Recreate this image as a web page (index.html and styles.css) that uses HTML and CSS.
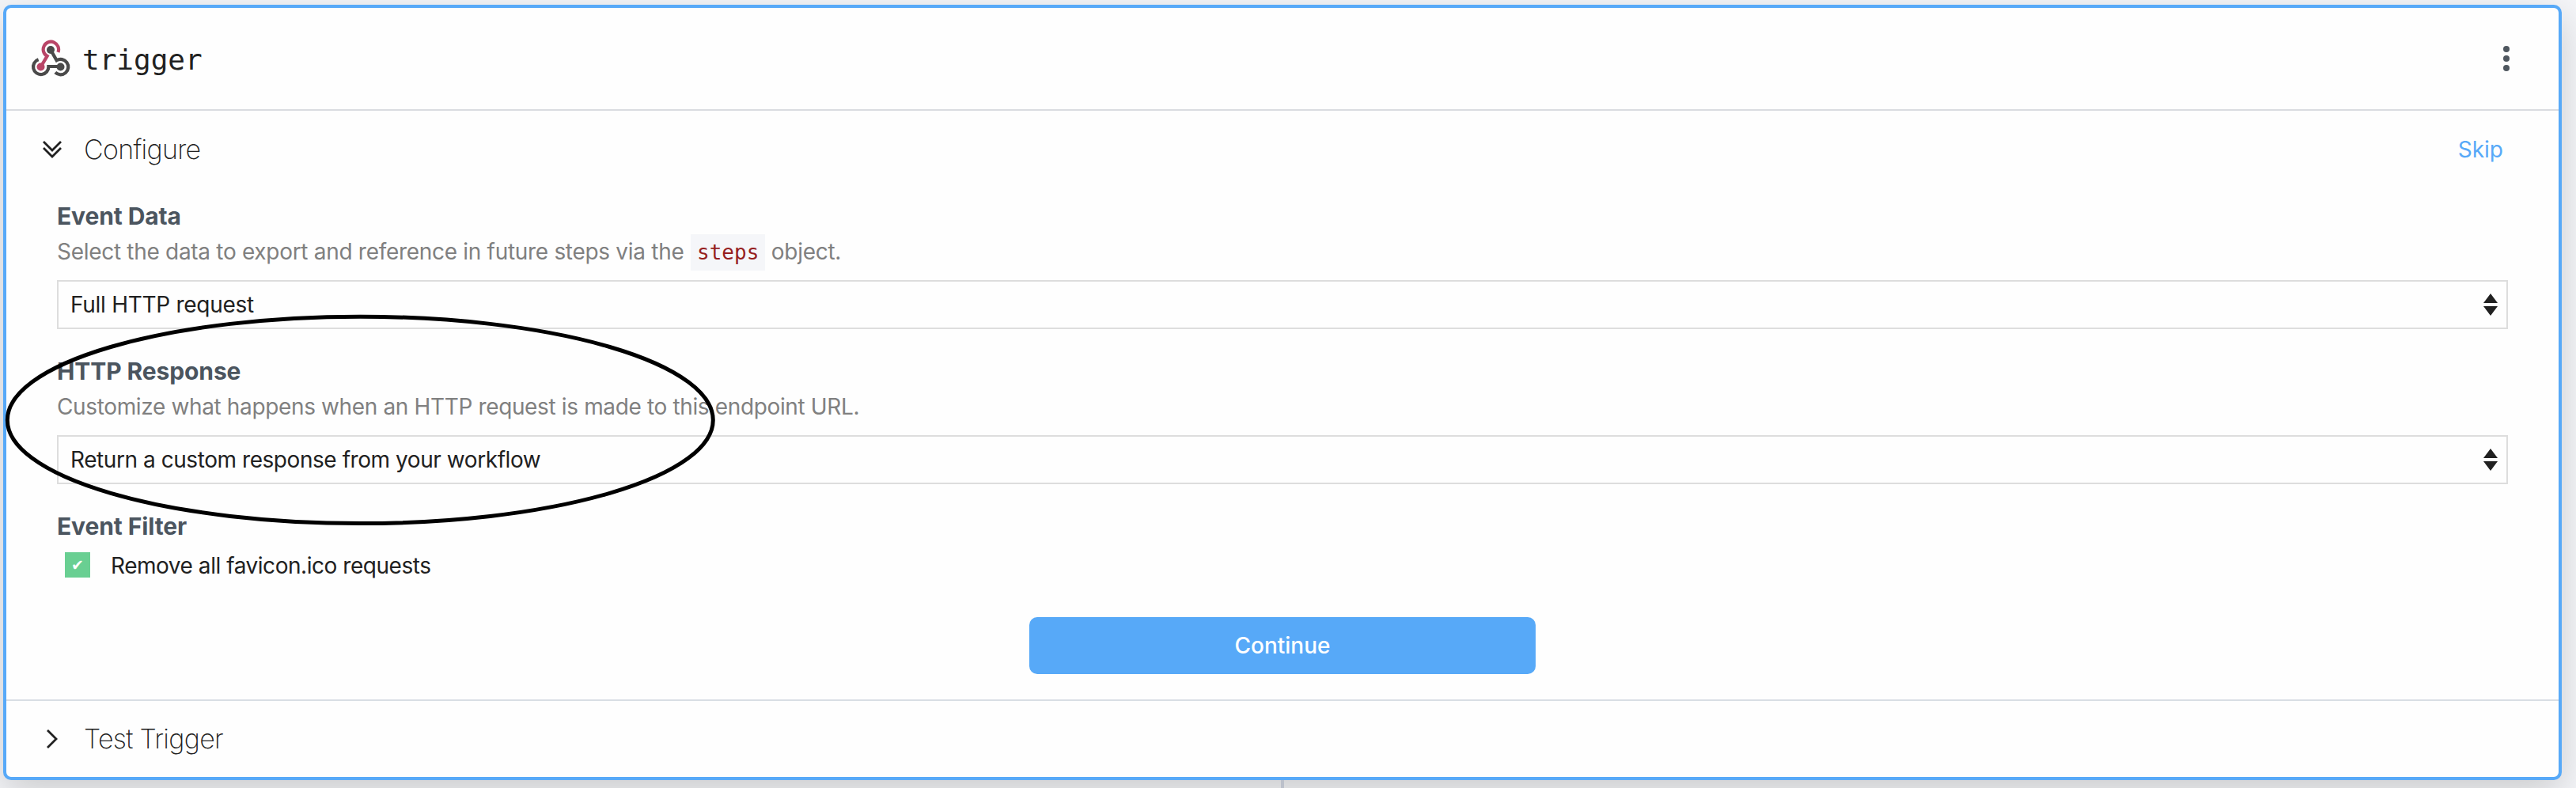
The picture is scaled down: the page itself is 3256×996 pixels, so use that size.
FILE: index.html
```
<!DOCTYPE html>
<html lang="en">
<head>
<meta charset="utf-8">
<title>trigger</title>
<link rel="stylesheet" href="styles.css">
</head>
<body>
<main class="page">
  <article class="card">
    <header class="card-header">
      <svg class="logo" width="52" height="48" viewBox="38 50 52 48" fill="none" stroke-width="4.2">
        <path stroke="#4a4a4a" d="M64 63 L71.6 76.3 A9.7 9.7 0 1 1 69.8 91.6"/>
        <path stroke="#4a4a4a" d="M76.5 84 H61.4 A9.7 9.7 0 1 1 48.6 75.2"/>
        <path stroke="#b94567" d="M51.5 84.5 L59.6 70.9 A9.7 9.7 0 1 1 73.4 66"/>
        <circle cx="64" cy="63" r="5" fill="#4a4a4a"/>
        <circle cx="76.5" cy="84.5" r="5" fill="#4a4a4a"/>
        <circle cx="51.5" cy="84.5" r="5" fill="#b94567"/>
      </svg>
      <h1 class="card-title">trigger</h1>
      <svg class="menu" width="8" height="32" viewBox="0 0 8 32" fill="#4f575f"><circle cx="4" cy="4" r="4"/><circle cx="4" cy="16" r="4"/><circle cx="4" cy="28" r="4"/></svg>
    </header>
    <section class="configure">
      <div class="section-head">
        <svg class="chevron" width="28" height="28" viewBox="0 0 28 28" fill="none" stroke="#212121" stroke-width="2.8"><path d="M3 4 L14 15 L25 4 M3 12 L14 23 L25 12"/></svg>
        <h2 class="section-title">Configure</h2>
        <a class="skip">Skip</a>
      </div>
      <div class="form">
        <div class="field">
          <div class="label">Event Data</div>
          <p class="help">Select the data to export and reference in future steps via the <code>steps</code> object.</p>
          <div class="select"><span class="short">Full HTTP request</span>
            <svg width="18" height="28" viewBox="0 0 18 28" fill="#212121"><path d="M9 0 L18 12 H0Z M0 16 H18 L9 28Z"/></svg></div>
        </div>
        <div class="field">
          <div class="label">HTTP Response</div>
          <p class="help tight">Customize what happens when an HTTP request is made to this endpoint URL.</p>
          <div class="select"><span>Return a custom response from your workflow</span>
            <svg width="18" height="28" viewBox="0 0 18 28" fill="#212121"><path d="M9 0 L18 12 H0Z M0 16 H18 L9 28Z"/></svg></div>
        </div>
        <div class="field">
          <div class="label">Event Filter</div>
          <div class="check-row"><span class="checkbox">✔</span><span class="check-text">Remove all favicon.ico requests</span></div>
        </div>
        <button class="continue">Continue</button>
      </div>
    </section>
    <section class="section-head test">
      <svg class="chevron" width="28" height="28" viewBox="0 0 28 28" fill="none" stroke="#212121" stroke-width="2.8"><path d="M8 3 L19 14 L8 25"/></svg>
      <h2 class="section-title">Test Trigger</h2>
    </section>
  </article>
  <div class="connector"></div>
  <svg class="ellipse" width="900" height="270" viewBox="5 396 900 270"><ellipse cx="455.3" cy="530.9" rx="446" ry="130.7" fill="none" stroke="#000" stroke-width="5"/></svg>
</main>
</body>
</html>
```
FILE: styles.css
```
* { box-sizing: border-box; margin: 0; padding: 0; }
body { background: #f4f5f8; font-family: Inter, "Liberation Sans", sans-serif; color: #212121; font-size: 28px; overflow: hidden; }
.page { position: relative; height: 996px; padding: 6px 18px 0 4px; overflow: hidden; }
.card { position: relative; z-index: 1; height: 980px; background: #fefefe; border: 4px solid #57a9f8; border-radius: 10px; box-shadow: 0 16px 48px rgba(0, 0, 0, .17); }
.card-header { height: 130px; display: flex; align-items: center; padding: 0 62px 0 30px; border-bottom: 2px solid #dadce0; }
.card-title { font: 400 36px/48px "DejaVu Sans Mono", monospace; margin-left: 14px; padding-top: 4px; flex: 1; }
.section-head { height: 98px; display: flex; align-items: center; padding: 0 70px 0 44px; }
.section-title { font-weight: 200; font-size: 34px; line-height: 48px; letter-spacing: -.7px; margin-left: 26px; flex: 1; }
.skip { color: #57a9f8; line-height: 40px; }
.configure { height: 746px; border-bottom: 2px solid #d9dee4; }
.form { padding: 14px 64px 0; display: flex; flex-direction: column; }
.field { margin-bottom: 32px; }
.label { font-weight: 700; font-size: 30px; letter-spacing: -.1px; color: #4b555f; line-height: 42px; }
.help { color: #808080; line-height: 48px; height: 48px; margin-bottom: 12px; white-space: nowrap; letter-spacing: -.3px; }
.help.tight { letter-spacing: -.36px; }
.help code { font: 26px/46px "DejaVu Sans Mono", monospace; letter-spacing: 0; color: #961f1f; background: #f5f6f9; display: inline-block; height: 46px; margin: 2px 0 0 1px; padding: 0 8px; vertical-align: top; }
.select { height: 62px; border: 2px solid #ddd; display: flex; align-items: center; justify-content: space-between; padding: 0 11px 0 15px; letter-spacing: -.44px; }
.select .short { letter-spacing: -.28px; }
.check-row { display: flex; align-items: center; gap: 26px; height: 32px; margin: 12px 0 0 10px; letter-spacing: -.46px; }
.check-text { line-height: 34px; padding-top: 2px; }
.checkbox { width: 32px; height: 32px; background: #69cf92; color: #fff; font: bold 19px/32px "DejaVu Sans", sans-serif; letter-spacing: 0; text-align: center; }
.continue { align-self: center; width: 640px; height: 72px; margin-top: 18px; border: 0; border-radius: 10px; background: #57a9f8; color: #fff; font: 500 28px/72px Inter, sans-serif; }
.test { height: 96px; }
.connector { width: 4px; height: 10px; margin-left: 1615px; background: #bbc0ca; position: relative; z-index: 2; }
.ellipse { position: absolute; left: 5px; top: 396px; z-index: 3; }
```
